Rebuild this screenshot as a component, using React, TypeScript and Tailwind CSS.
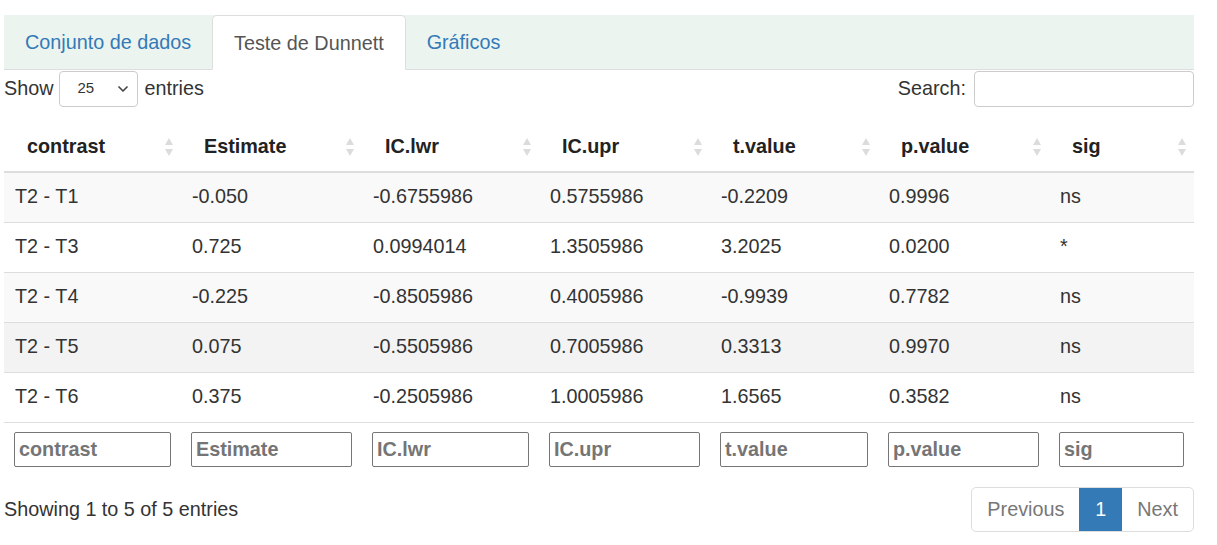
import { ChevronDown } from "lucide-react";

const cols = [
  { key: "contrast", w: "w-[177px]" },
  { key: "Estimate", w: "w-[181px]" },
  { key: "IC.lwr", w: "w-[177px]" },
  { key: "IC.upr", w: "w-[171px]" },
  { key: "t.value", w: "w-[168px]" },
  { key: "p.value", w: "w-[171px]" },
  { key: "sig", w: "w-[145px]" },
];

const rows = [
  ["T2 - T1", "-0.050", "-0.6755986", "0.5755986", "-0.2209", "0.9996", "ns"],
  ["T2 - T3", "0.725", "0.0994014", "1.3505986", "3.2025", "0.0200", "*"],
  ["T2 - T4", "-0.225", "-0.8505986", "0.4005986", "-0.9939", "0.7782", "ns"],
  ["T2 - T5", "0.075", "-0.5505986", "0.7005986", "0.3313", "0.9970", "ns"],
  ["T2 - T6", "0.375", "-0.2505986", "1.0005986", "1.6565", "0.3582", "ns"],
];

const rowBg = ["bg-[#f9f9f9]", "bg-white", "bg-[#f9f9f9]", "bg-[#f3f3f3]", "bg-white"];

// small up/down arrows used by DataTables for sortable headers
const SortIcon = () => (
  <svg width="10" height="20" viewBox="0 0 10 20" className="shrink-0">
    <path d="M5 1 L9 8 L1 8 Z" fill="#dcdcdc" />
    <path d="M5 19 L9 12 L1 12 Z" fill="#dcdcdc" />
  </svg>
);

export default function App() {
  return (
    <div
      className="bg-white min-h-screen pt-[15px] pl-[4px] text-[#333]"
      style={{ fontFamily: '"Liberation Sans", Arial, sans-serif' }}
    >
      <div className="w-[1190px]">
        {/* Tabs */}
        <div className="flex h-[55px] bg-[#ecf4ef] border-b border-[#ddd] text-[19.8px]">
          <div className="px-[21px] pt-[2px] flex items-center text-[#337ab7]">Conjunto de dados</div>
          <div className="px-[21px] pt-[2px] flex items-center bg-white border border-[#ddd] border-b-white -mb-px rounded-t-[5px] text-[#555]">
            Teste de Dunnett
          </div>
          <div className="px-[21px] pt-[2px] flex items-center text-[#337ab7]">Gráficos</div>
        </div>

        {/* Controls */}
        <div className="flex justify-between items-center h-[37px] text-[19.8px]">
          <div className="flex items-center">
            <span>Show</span>
            <div className="mx-[6px] w-[79px] h-[36px] border border-[#ccc] rounded-[4px] flex items-center justify-between pl-[17px] pr-[6px]">
              <span className="text-[15px]">25</span>
              <ChevronDown size={16} strokeWidth={2.5} className="text-[#444]" />
            </div>
            <span>entries</span>
          </div>
          <div className="flex items-center">
            <span>Search:</span>
            <div className="ml-[8px] w-[220px] h-[36px] border border-[#ccc] rounded-[4px]" />
          </div>
        </div>

        {/* Table */}
        <table className="mt-[15px] w-[1190px] table-fixed border-collapse text-[19.8px]">
          <thead>
            <tr className="h-[50px] border-b-2 border-[#ddd]">
              {cols.map((c) => (
                <th key={c.key} className={`${c.w} text-left font-bold p-0`}>
                  <div className="flex items-center justify-between pl-[23px] pr-[7px] text-[#222]">
                    <span>{c.key}</span>
                    <SortIcon />
                  </div>
                </th>
              ))}
            </tr>
          </thead>
          <tbody>
            {rows.map((r, i) => (
              <tr key={i} className={`h-[50px] border-t border-[#ddd] ${rowBg[i]}`}>
                {r.map((v, j) => (
                  <td key={j} className="px-[11px] font-normal">
                    {v}
                  </td>
                ))}
              </tr>
            ))}
          </tbody>
          <tfoot>
            <tr className="h-[55px] border-t border-[#ddd]">
              {cols.map((c) => (
                <th key={c.key} className="px-[10px] font-bold">
                  <div className="h-[35px] border border-[#767676] rounded-[2px] flex items-center px-[4px] text-[#757575] text-[19.8px]">
                    {c.key}
                  </div>
                </th>
              ))}
            </tr>
          </tfoot>
        </table>

        {/* Footer */}
        <div className="flex justify-between items-center mt-[10px] text-[19.8px]">
          <div>Showing 1 to 5 of 5 entries</div>
          <div className="flex h-[45px] border border-[#ddd] rounded-[5px] overflow-hidden">
            <div className="px-[15px] flex items-center text-[#777]">Previous</div>
            <div className="w-[43px] flex items-center justify-center bg-[#337ab7] text-white">1</div>
            <div className="px-[15px] flex items-center text-[#777]">Next</div>
          </div>
        </div>
      </div>
    </div>
  );
}
